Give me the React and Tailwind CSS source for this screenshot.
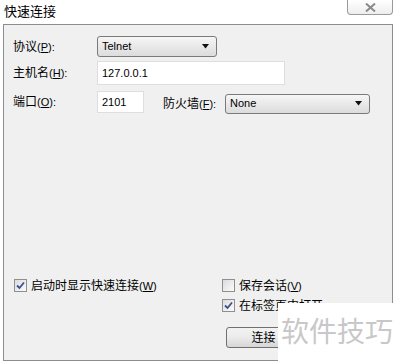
import React from 'react';

const font = { fontFamily: '"Liberation Sans", "Noto Sans CJK SC", sans-serif' };

function Select({ value, className }) {
  return (
    <div
      className={`flex items-center justify-between border border-[#7a7a7a] rounded-[3px] bg-gradient-to-b from-[#f6f6f6] to-[#dcdcdc] pl-[4px] pr-[6px] text-[11px] text-black ${className}`}
    >
      <span>{value}</span>
      <svg width="8" height="5" viewBox="0 0 8 5">
        <path d="M0 0 H7 L3.5 4.5 Z" fill="#111" />
      </svg>
    </div>
  );
}

function Checkbox({ checked, label, hot, rest }) {
  return (
    <label className="flex items-center h-[13px]">
      <span className="w-[13px] h-[13px] border border-[#8e8f8f] bg-gradient-to-br from-[#dcdcdc] to-[#fbfbfb] flex items-center justify-center">
        {checked && (
          <svg width="9" height="9" viewBox="0 0 9 9">
            <path d="M1 4.5 L3.5 7 L8 1.5" stroke="#3b4f8a" strokeWidth="1.8" fill="none" />
          </svg>
        )}
      </span>
      <span className="ml-[4px] text-[12px] leading-none text-black">
        {label}
        {hot && (
          <span className="text-[11px]">
            (<u>{hot}</u>){rest}
          </span>
        )}
      </span>
    </label>
  );
}

function Label({ text, hot, className }) {
  return (
    <span className={`text-[12px] text-black ${className}`}>
      {text}
      <span className="text-[11px]">
        (<u>{hot}</u>):
      </span>
    </span>
  );
}

export default function App() {
  return (
    <div className="relative w-[396px] h-[363px] bg-white overflow-hidden" style={font}>
      {/* Title bar */}
      <div className="flex justify-between h-[24px]">
        <div className="pl-[4px] pt-[2px] text-[13px] text-black">快速连接</div>
        <div className="mr-[3px] w-[46px] h-[15px] border border-t-0 border-[#9a9a9a] rounded-b-[4px] bg-gradient-to-b from-white to-[#eeeeee] flex items-center justify-center">
          <svg width="11" height="9" viewBox="0 0 11 9">
            <path d="M1 0.5 L10 8.5 M10 0.5 L1 8.5" stroke="#8a8a8a" strokeWidth="2" fill="none" />
          </svg>
        </div>
      </div>

      {/* Panel */}
      <div className="mx-[3px] h-[337px] border border-[#8d8d8d] bg-[#f0f0f0] flex flex-col">
        <div className="mt-[11px] flex items-center h-[21px]">
          <Label text="协议" hot="P" className="w-[93px] pl-[9px]" />
          <Select value="Telnet" className="w-[120px] h-[21px]" />
        </div>

        <div className="mt-[4px] flex items-center h-[24px]">
          <Label text="主机名" hot="H" className="w-[93px] pl-[9px]" />
          <div className="w-[188px] h-[24px] border border-[#dedede] bg-white pl-[4px] text-[11px] flex items-center">
            127.0.0.1
          </div>
        </div>

        <div className="mt-[6px] flex items-center h-[22px]">
          <Label text="端口" hot="O" className="w-[93px] pl-[9px]" />
          <div className="w-[47px] h-[22px] border border-[#dedede] bg-white pl-[4px] text-[11px] flex items-center">
            2101
          </div>
          <Label text="防火墙" hot="F" className="ml-[19px] w-[62px] mt-[3px]" />
          <Select value="None" className="w-[145px] h-[20px] mt-[3px]" />
        </div>

        <div className="flex-1" />

        <div className="grid grid-cols-[208px_1fr] pl-[10px] gap-y-[7px]">
          <Checkbox checked label="启动时显示快速连接" hot="W" />
          <Checkbox label="保存会话" hot="V" />
          <div />
          <Checkbox checked label="在标签页中打开" />
        </div>

        <div className="mt-[15px] mb-[12px] pl-[222px]">
          <div className="w-[75px] h-[21px] border border-[#707070] rounded-[3px] bg-gradient-to-b from-[#f2f2f2] via-[#ebebeb] to-[#d6d6d6] flex items-center justify-center text-[12px] text-black">
            连接
          </div>
        </div>
      </div>

      {/* Watermark */}
      <div className="absolute left-[278px] top-[303px] w-[118px] h-[60px] bg-white flex items-center pl-[3px] text-[28px] text-[#c8c8c8]">
        软件技巧
      </div>
    </div>
  );
}
